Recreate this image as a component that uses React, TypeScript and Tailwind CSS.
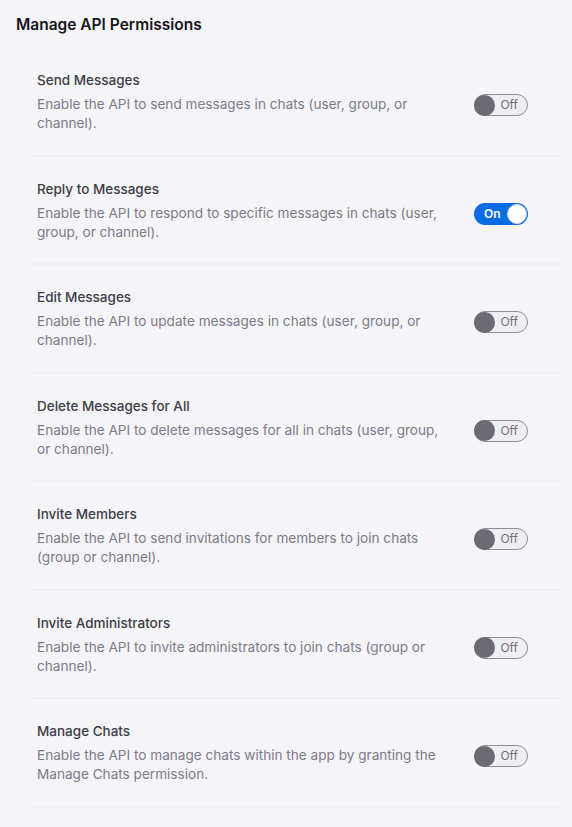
import React, { useState } from 'react';

const permissions = [
  { title: 'Send Messages', desc: 'Enable the API to send messages in chats (user, group, or channel).', on: false },
  { title: 'Reply to Messages', desc: 'Enable the API to respond to specific messages in chats (user, group, or channel).', on: true },
  { title: 'Edit Messages', desc: 'Enable the API to update messages in chats (user, group, or channel).', on: false },
  { title: 'Delete Messages for All', desc: 'Enable the API to delete messages for all in chats (user, group, or channel).', on: false },
  { title: 'Invite Members', desc: 'Enable the API to send invitations for members to join chats (group or channel).', on: false },
  { title: 'Invite Administrators', desc: 'Enable the API to invite administrators to join chats (group or channel).', on: false },
  { title: 'Manage Chats', desc: 'Enable the API to manage chats within the app by granting the Manage Chats permission.', on: false },
];

const Toggle = ({ on, onClick }: { on: boolean; onClick: () => void }) => {
  if (on) {
    return (
      <button
        onClick={onClick}
        className="shrink-0 w-[54px] h-[22px] rounded-full bg-[#0a6ce2] flex items-center justify-between pl-[10px] pr-[1px]"
      >
        <span className="text-white text-[12px] font-semibold leading-none">On</span>
        <span className="w-[20px] h-[20px] rounded-full bg-white border border-[#d6d6dc]" />
      </button>
    );
  }
  return (
    <button
      onClick={onClick}
      className="shrink-0 w-[54px] h-[22px] rounded-full bg-[#efeef3] border border-[#8e8e96] flex items-center justify-between pl-0 pr-[9px]"
    >
      <span className="w-[21px] h-[21px] -ml-[1px] rounded-full bg-[#6b6b73]" />
      <span className="text-[#707078] text-[12px] leading-none">Off</span>
    </button>
  );
};

const App = () => {
  const [state, setState] = useState(permissions.map((p) => p.on));

  return (
    <div className="min-h-screen bg-[#f5f4f9] font-['Inter',sans-serif]">
      <h1 className="pt-[15px] pl-4 mb-[13px] text-[15.5px] leading-5 font-semibold text-[#16161a]">
        Manage API Permissions
      </h1>
      <div className="ml-[32px] mr-[12px]">
        {permissions.map((p, i) => (
          <div key={p.title} className="pt-[22px] pb-[21.5px] pl-[5px] pr-[32px] border-b-2 border-[#f0eff6]">
            <div className="text-[13.5px] leading-5 font-medium text-[#3d3d46]">{p.title}</div>
            <div className="mt-[5px] flex items-start justify-between gap-4">
              <p className="w-[412px] text-[13.6px] leading-[19px] text-[#7c7b88]">{p.desc}</p>
              <div className="mt-[-1px]">
                <Toggle
                  on={state[i]}
                  onClick={() => setState((s) => s.map((v, j) => (j === i ? !v : v)))}
                />
              </div>
            </div>
          </div>
        ))}
      </div>
    </div>
  );
};

export default App;
